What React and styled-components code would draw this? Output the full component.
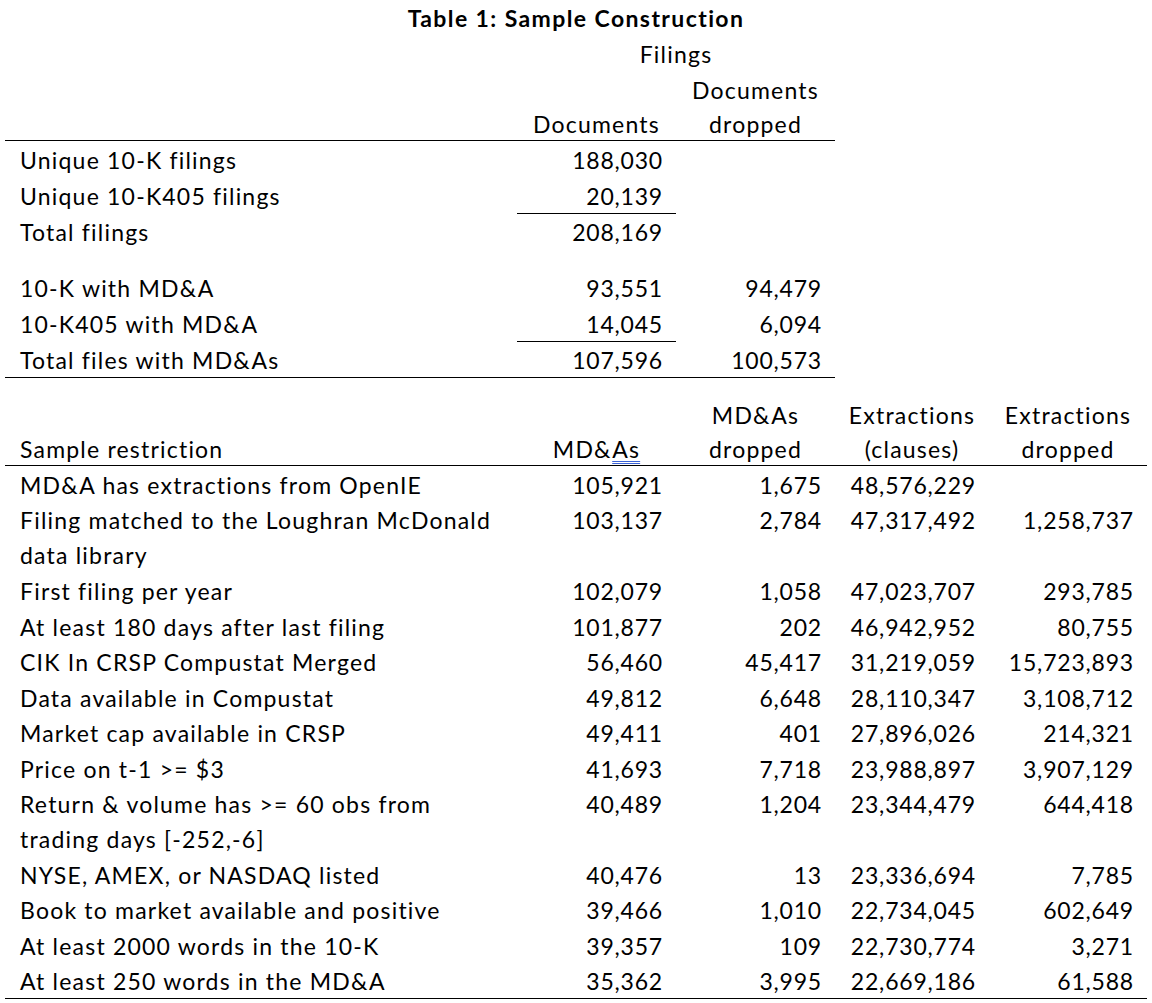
import React from "react";
import styled, { createGlobalStyle } from "styled-components";

const GlobalStyle = createGlobalStyle`
  html, body { margin: 0; padding: 0; background: #ffffff; }
  body {
    font-family: Lato, "Open Sans", "Liberation Sans", sans-serif;
    color: #000000;
  }
`;

const Sheet = styled.div`
  width: 1142px;
  padding-left: 5px;
  font-size: 23px;
  font-variant-numeric: tabular-nums;
  font-variant-ligatures: none;
  letter-spacing: 1.2px;
`;

const Row = styled.div`
  box-sizing: border-box;
  display: grid;
  grid-template-columns: 512px 159px 159px 154px 158px;
  height: ${(p) => p.$h}px;
  border-bottom: ${(p) => (p.$rule ? "1px solid #000000" : "0")};
`;

const Cell = styled.div`
  grid-column: span ${(p) => p.$span || 1};
  display: flex;
  flex-direction: column;
  justify-content: ${(p) => (p.$valign === "bottom" ? "flex-end" : "flex-start")};
  align-items: ${(p) =>
    p.$align === "right" ? "flex-end" : p.$align === "center" ? "center" : "flex-start"};
  text-align: ${(p) => p.$align || "left"};
  padding-top: ${(p) => (p.$pt ?? (p.$valign === "bottom" ? 0 : 2))}px;
  padding-right: ${(p) => (p.$align === "right" ? 13 : 0)}px;
  padding-left: ${(p) => (p.$align === "left" || !p.$align ? 15 : 0)}px;
  line-height: ${(p) => p.$lh || 35}px;
  white-space: nowrap;
  letter-spacing: ${(p) => (p.$bold ? 1.4 : p.$align === "right" ? 0.8 : 1.2)}px;
  font-weight: ${(p) => (p.$bold ? 700 : 400)};
  box-shadow: ${(p) => (p.$rule ? "inset 0 -1px 0 #000000" : "none")};
`;

const Flag = styled.span`
  text-decoration-line: underline;
  text-decoration-style: double;
  text-decoration-color: #3b63d6;
  text-decoration-thickness: 1px;
  text-underline-offset: 3px;
`;

const upper = [
  { label: "Unique 10-K filings", b: "188,030", c: "" },
  { label: "Unique 10-K405 filings", b: "20,139", c: "", sub: true },
  { label: "Total filings", b: "208,169", c: "" },
  null,
  { label: "10-K with MD&A", b: "93,551", c: "94,479" },
  { label: "10-K405 with MD&A", b: "14,045", c: "6,094", sub: true },
  { label: "Total files with MD&As", b: "107,596", c: "100,573", rule: true },
];

const lower = [
  ["MD&A has extractions from OpenIE", "105,921", "1,675", "48,576,229", ""],
  [["Filing matched to the Loughran McDonald", "data library"], "103,137", "2,784", "47,317,492", "1,258,737"],
  ["First filing per year", "102,079", "1,058", "47,023,707", "293,785"],
  ["At least 180 days after last filing", "101,877", "202", "46,942,952", "80,755"],
  ["CIK In CRSP Compustat Merged", "56,460", "45,417", "31,219,059", "15,723,893"],
  ["Data available in Compustat", "49,812", "6,648", "28,110,347", "3,108,712"],
  ["Market cap available in CRSP", "49,411", "401", "27,896,026", "214,321"],
  ["Price on t-1 >= $3", "41,693", "7,718", "23,988,897", "3,907,129"],
  [["Return & volume has >= 60 obs from", "trading days [-252,-6]"], "40,489", "1,204", "23,344,479", "644,418"],
  ["NYSE, AMEX, or NASDAQ listed", "40,476", "13", "23,336,694", "7,785"],
  ["Book to market available and positive", "39,466", "1,010", "22,734,045", "602,649"],
  ["At least 2000 words in the 10-K", "39,357", "109", "22,730,774", "3,271"],
  ["At least 250 words in the MD&A", "35,362", "3,995", "22,669,186", "61,588"],
];

const LINE = 35.45;

function Lines({ items }) {
  return items.map((t, i) => <span key={i}>{t}</span>);
}

export default function App() {
  return (
    <>
      <GlobalStyle />
      <Sheet>
        <Row $h={36}>
          <Cell $span={5} $align="center" $bold $pt={1}>
            Table 1: Sample Construction
          </Cell>
        </Row>
        <Row $h={36}>
          <Cell $pt={1} />
          <Cell $span={2} $align="center" $pt={1}>Filings</Cell>
        </Row>
        <Row $h={69}>
          <Cell $rule $valign="bottom" $lh={34} />
          <Cell $rule $valign="bottom" $lh={34} $align="center">Documents</Cell>
          <Cell $rule $valign="bottom" $lh={34} $align="center">
            <Lines items={["Documents", "dropped"]} />
          </Cell>
        </Row>
        {upper.map((r, i) =>
          r === null ? (
            <Row key={i} $h={20} />
          ) : (
            <Row key={i} $h={36}>
              <Cell $rule={r.rule}>{r.label}</Cell>
              <Cell $align="right" $rule={r.sub || r.rule}>{r.b}</Cell>
              <Cell $align="right" $rule={r.rule}>{r.c}</Cell>
            </Row>
          )
        )}
        <Row $h={20} />
        <Row $h={69}>
          <Cell $rule $valign="bottom" $lh={34}>Sample restriction</Cell>
          <Cell $rule $valign="bottom" $lh={34} $align="center">
            <span>
              MD&amp;<Flag>As</Flag>
            </span>
          </Cell>
          <Cell $rule $valign="bottom" $lh={34} $align="center">
            <Lines items={["MD&As", "dropped"]} />
          </Cell>
          <Cell $rule $valign="bottom" $lh={34} $align="center">
            <Lines items={["Extractions", "(clauses)"]} />
          </Cell>
          <Cell $rule $valign="bottom" $lh={34} $align="center">
            <Lines items={["Extractions", "dropped"]} />
          </Cell>
        </Row>
        {lower.map((r, i) => {
          const two = Array.isArray(r[0]);
          const last = i === lower.length - 1;
          return (
            <Row key={i} $h={last ? 36.5 : two ? LINE * 2 : LINE} $rule={last}>
              <Cell>{two ? <Lines items={r[0]} /> : r[0]}</Cell>
              <Cell $align="right">{r[1]}</Cell>
              <Cell $align="right">{r[2]}</Cell>
              <Cell $align="right">{r[3]}</Cell>
              <Cell $align="right">{r[4]}</Cell>
            </Row>
          );
        })}
      </Sheet>
    </>
  );
}
